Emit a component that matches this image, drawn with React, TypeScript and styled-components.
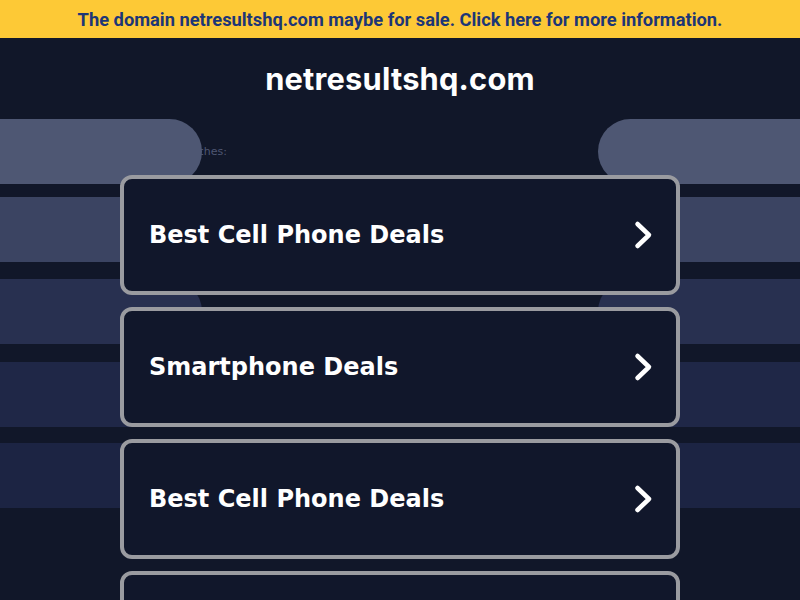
import React from "react";
import styled, { createGlobalStyle } from "styled-components";

const Global = createGlobalStyle`
  html, body { margin: 0; padding: 0; background: #111729; }
  body { overflow: hidden; }
  * { box-sizing: border-box; }
`;

const Page = styled.div`
  width: 800px;
  height: 600px;
  background: #111729;
  overflow: hidden;
`;

const Banner = styled.a`
  display: flex;
  align-items: center;
  justify-content: center;
  height: 38px;
  background: #fdc936;
  color: #1d3676;
  font-family: Roboto, "Liberation Sans", sans-serif;
  font-weight: 700;
  font-size: 18.3px;
  text-decoration: none;
`;

const Title = styled.h1`
  margin: 0;
  height: 81px;
  display: flex;
  align-items: center;
  justify-content: center;
  color: #ffffff;
  font-family: Inter, "Open Sans", sans-serif;
  font-weight: 700;
  font-size: 30.8px;
  letter-spacing: 0.2px;
`;

const Main = styled.div`
  position: relative;
`;

const Backdrop = styled.div`
  position: absolute;
  inset: 0;
  z-index: 1;
  display: flex;
  flex-direction: column;
  pointer-events: none;
`;

const Stripe = styled.div<{ $color: string; $split?: boolean; $gap: number }>`
  height: 65px;
  margin-top: ${(p) => p.$gap}px;
  display: flex;
  justify-content: space-between;
  background: ${(p) => (p.$split ? "transparent" : p.$color)};
`;

const Segment = styled.div<{ $color: string; $side: "left" | "right" }>`
  width: 202px;
  height: 100%;
  background: ${(p) => p.$color};
  border-radius: ${(p) => (p.$side === "left" ? "0 33px 33px 0" : "33px 0 0 33px")};
`;

const Column = styled.div`
  position: relative;
  width: 560px;
  margin: 0 auto;
  display: flex;
  flex-direction: column;
  gap: 12px;
`;

const Label = styled.div`
  position: relative;
  z-index: 0;
  height: 45px;
  padding-top: 20px;
  display: flex;
  align-items: center;
  padding-left: 9px;
  margin-bottom: -1px;
  color: #4e5672;
  font-family: "DejaVu Sans", sans-serif;
  font-size: 11px;
`;

const Card = styled.a`
  position: relative;
  z-index: 2;
  height: 120px;
  display: flex;
  align-items: center;
  justify-content: space-between;
  padding: 0 23px 0 25px;
  background: #11172b;
  border: 4px solid #9a9ba0;
  border-radius: 12px;
  color: #ffffff;
  text-decoration: none;
  font-family: "DejaVu Sans", sans-serif;
  font-weight: 700;
  font-size: 24px;
`;

const Chevron = () => (
  <svg width="20" height="30" viewBox="0 0 20 30">
    <path d="M4.5 4 L16 15 L4.5 26" fill="none" stroke="#fff" strokeWidth="4.5" strokeLinecap="round" strokeLinejoin="round" />
  </svg>
);

const stripes = [
  { color: "#4e5773", split: true, gap: 0 },
  { color: "#3b4462", split: false, gap: 13 },
  { color: "#283050", split: true, gap: 17 },
  { color: "#1f2747", split: false, gap: 18 },
  { color: "#1c2443", split: false, gap: 16 },
];

const cards = ["Best Cell Phone Deals", "Smartphone Deals", "Best Cell Phone Deals", "Cheap Cell Phone Plans"];

export default function App() {
  return (
    <Page>
      <Global />
      <Banner href="#">The domain netresultshq.com maybe for sale. Click here for more information.</Banner>
      <Title>netresultshq.com</Title>
      <Main>
        <Backdrop>
          {stripes.map((s, i) => (
            <Stripe key={i} $color={s.color} $split={s.split} $gap={s.gap}>
              {s.split && (
                <>
                  <Segment $color={s.color} $side="left" />
                  <Segment $color={s.color} $side="right" />
                </>
              )}
            </Stripe>
          ))}
        </Backdrop>
        <Column>
          <Label>Related searches:</Label>
          {cards.map((c, i) => (
            <Card key={i} href="#">
              {c}
              <Chevron />
            </Card>
          ))}
        </Column>
      </Main>
    </Page>
  );
}
